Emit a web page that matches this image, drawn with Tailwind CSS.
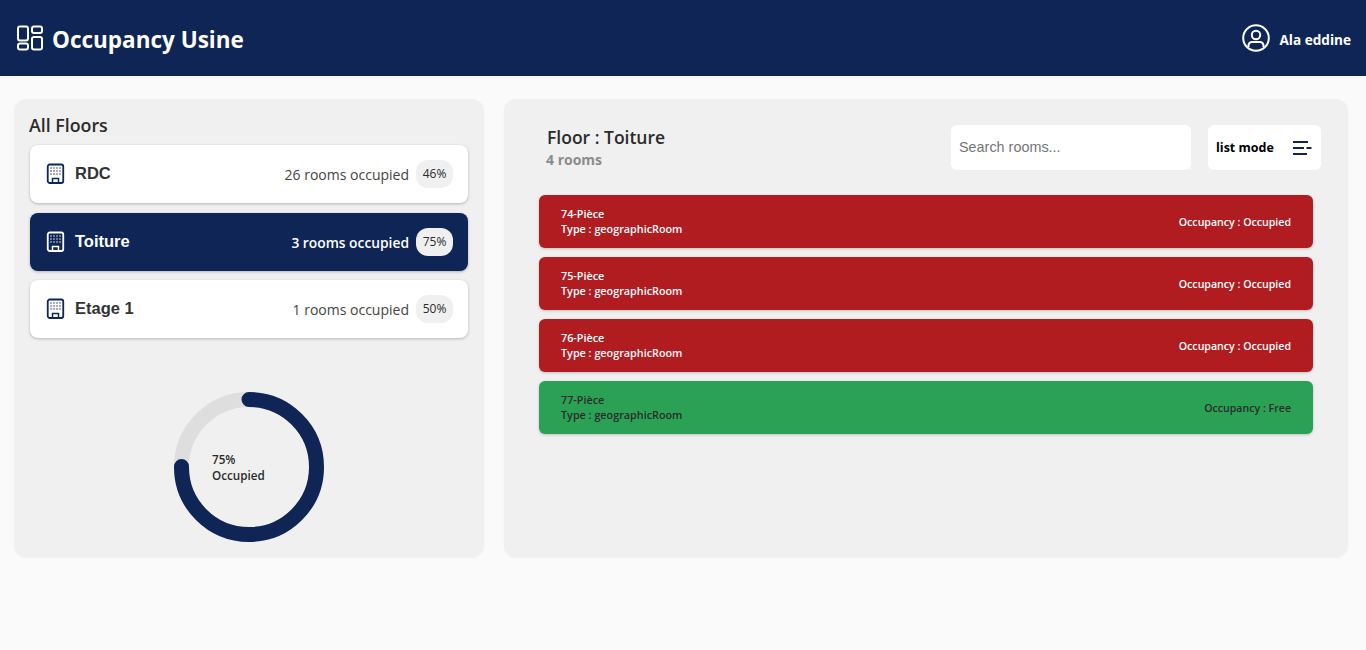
<!DOCTYPE html>
<html lang="en">
<head>
    <meta charset="UTF-8">
    <title>Occupancy Usine</title>
    <script src="https://cdn.jsdelivr.net/npm/@tailwindcss/browser@4"></script>
</head>
<body class="bg-[#fafafa] text-[#2b2b2b] font-['Open_Sans',sans-serif] h-[650px] overflow-hidden">

    <!-- Header -->
    <header class="h-[76px] bg-[#0e2555] flex items-center justify-between pl-[17px] pr-[15px] text-white">
        <div class="flex items-center gap-[9px]">
            <svg class="w-[26px] h-[26px]" viewBox="0 0 26 26" fill="none" stroke="white" stroke-width="2">
                <rect x="1" y="1.5" width="10" height="14" rx="2"/>
                <rect x="15" y="1.5" width="10" height="6.5" rx="2"/>
                <rect x="1" y="18.5" width="10" height="6" rx="2"/>
                <rect x="15" y="12" width="10" height="12.5" rx="2"/>
            </svg>
            <h1 class="text-[22.5px] font-bold leading-none pt-[4px]">Occupancy Usine</h1>
        </div>
        <div class="flex items-center gap-[9px]">
            <svg class="w-[28px] h-[28px]" viewBox="0 0 28 28" fill="none" stroke="white" stroke-width="2">
                <circle cx="14" cy="14" r="12.8"/>
                <circle cx="14" cy="11" r="4.2"/>
                <path d="M6.5 23 V21.5 a3.5 3.5 0 0 1 3.5 -3.5 h8 a3.5 3.5 0 0 1 3.5 3.5 V23"/>
            </svg>
            <span class="text-[13.6px] font-bold pt-[4px]">Ala eddine</span>
        </div>
    </header>

    <main class="flex gap-5 pl-[14px] pr-[18px] pt-[23px]">
        <!-- Floors -->
        <section class="w-[470px] h-[458px] bg-[#f0f0f0] rounded-xl shadow-[0_1px_2px_rgba(0,0,0,0.04)] px-4 pt-[15px]">
            <h2 class="text-[17.8px] font-semibold leading-[22px] mb-[9px] -ml-[1px]">All Floors</h2>
            <div class="flex flex-col gap-[9px]">
                <div class="h-[58px] mb-[1px] bg-white rounded-lg shadow-[0_1px_3px_rgba(0,0,0,0.25)] flex items-center justify-between px-[15px]">
                    <div class="flex items-center gap-[10px]">
                        <svg class="w-5 h-[22px] text-[#0e2555]" viewBox="0 0 20 22" fill="none" stroke="currentColor"><rect x="2.75" y="1.5" width="15.5" height="18.5" rx="2" stroke-width="1.8"/><path d="M5.5 5h1M8.5 5h1M11.5 5h1M14.5 5h1M5.5 8h1M8.5 8h1M11.5 8h1M14.5 8h1M5.5 11h1M8.5 11h1M11.5 11h1M14.5 11h1" stroke-width="1.5"/><path d="M7.5 20v-4.5h6V20" stroke-width="1.5"/></svg>
                        <span class="font-['Liberation_Sans',sans-serif] text-[16.5px] font-bold text-[#333] pb-[2px]">RDC</span>
                    </div>
                    <div class="flex items-center gap-[7px]">
                        <span class="text-[14px] font-medium text-[#444]">26 rooms occupied</span>
                        <span class="w-[37px] h-7 rounded-[12px] bg-[#f0f0f0] flex items-center justify-center text-[12px] font-medium">46%</span>
                    </div>
                </div>
                <div class="h-[58px] bg-[#0e2555] rounded-lg shadow-[0_1px_3px_rgba(0,0,0,0.25)] flex items-center justify-between px-[15px] text-white">
                    <div class="flex items-center gap-[10px]">
                        <svg class="w-5 h-[22px]" viewBox="0 0 20 22" fill="none" stroke="currentColor"><rect x="2.75" y="1.5" width="15.5" height="18.5" rx="2" stroke-width="1.8"/><path d="M5.5 5h1M8.5 5h1M11.5 5h1M14.5 5h1M5.5 8h1M8.5 8h1M11.5 8h1M14.5 8h1M5.5 11h1M8.5 11h1M11.5 11h1M14.5 11h1" stroke-width="1.5"/><path d="M7.5 20v-4.5h6V20" stroke-width="1.5"/></svg>
                        <span class="font-['Liberation_Sans',sans-serif] text-[16.5px] font-bold pb-[2px]">Toiture</span>
                    </div>
                    <div class="flex items-center gap-[7px]">
                        <span class="text-[13.8px] font-semibold pt-[2px]">3 rooms occupied</span>
                        <span class="w-[37px] h-7 rounded-[12px] bg-[#f0f0f0] text-[#2b2b2b] flex items-center justify-center text-[12px] font-medium">75%</span>
                    </div>
                </div>
                <div class="h-[58px] bg-white rounded-lg shadow-[0_1px_3px_rgba(0,0,0,0.25)] flex items-center justify-between px-[15px]">
                    <div class="flex items-center gap-[10px]">
                        <svg class="w-5 h-[22px] text-[#0e2555]" viewBox="0 0 20 22" fill="none" stroke="currentColor"><rect x="2.75" y="1.5" width="15.5" height="18.5" rx="2" stroke-width="1.8"/><path d="M5.5 5h1M8.5 5h1M11.5 5h1M14.5 5h1M5.5 8h1M8.5 8h1M11.5 8h1M14.5 8h1M5.5 11h1M8.5 11h1M11.5 11h1M14.5 11h1" stroke-width="1.5"/><path d="M7.5 20v-4.5h6V20" stroke-width="1.5"/></svg>
                        <span class="font-['Liberation_Sans',sans-serif] text-[16.5px] font-bold text-[#333] pb-[2px]">Etage 1</span>
                    </div>
                    <div class="flex items-center gap-[7px]">
                        <span class="text-[14px] font-medium text-[#444]">1 rooms occupied</span>
                        <span class="w-[37px] h-7 rounded-[12px] bg-[#f0f0f0] flex items-center justify-center text-[12px] font-medium">50%</span>
                    </div>
                </div>
            </div>

            <!-- Donut -->
            <div class="relative w-[150px] h-[150px] mx-auto mt-[53.5px]">
                <svg class="w-[150px] h-[150px] -rotate-90" viewBox="0 0 150 150" fill="none" stroke-width="15">
                    <circle cx="75" cy="75" r="67.5" stroke="#dedede"/>
                    <circle cx="75" cy="75" r="67.5" stroke="#0e2555" stroke-linecap="round" stroke-dasharray="318 424.1"/>
                </svg>
                <div class="absolute left-[38px] top-[59px] text-[11.7px] leading-[16px] font-semibold text-[#2b2b2b]">75%<br>Occupied</div>
            </div>
        </section>

        <!-- Rooms -->
        <section class="flex-1 h-[458px] bg-[#f0f0f0] rounded-xl shadow-[0_1px_2px_rgba(0,0,0,0.04)] pl-[35px] pr-[35px] pt-[26px]">
            <div class="flex items-start justify-between h-[70px]">
                <div class="pl-2">
                    <h2 class="text-[17.5px] font-semibold leading-[24px]">Floor : Toiture</h2>
                    <p class="text-[14px] font-bold text-[#8c8c8c] leading-[21px] -ml-[1px]">4 rooms</p>
                </div>
                <div class="flex gap-[17px] -mr-2">
                    <input class="w-[240px] h-[45px] bg-white rounded-md px-2 pb-[2px] text-[14.4px] font-['Liberation_Sans',sans-serif] placeholder:text-[#757575] outline-none" placeholder="Search rooms...">
                    <div class="w-[113px] h-[45px] bg-white rounded-md flex items-center justify-between pl-2 pr-[9px]">
                        <span class="text-[12.5px] font-bold text-black pt-[1px]">list mode</span>
                        <svg class="w-5 h-4" viewBox="0 0 20 16" fill="none" stroke="#0e2555" stroke-width="2"><path d="M1 2h15M1 8h11M14.5 8h5M1 14h14"/></svg>
                    </div>
                </div>
            </div>
            <div class="flex flex-col gap-[9px]">
                <div class="h-[53px] bg-[#b01c1f] rounded-md shadow-[0_1px_3px_rgba(0,0,0,0.2)] flex items-center justify-between px-[22px] text-white text-[10.8px] font-semibold leading-[15px]">
                    <div class="pb-[2px]">74-Pièce<br>Type : geographicRoom</div>
                    <div class="pt-[2px] text-[10.6px]">Occupancy : Occupied</div>
                </div>
                <div class="h-[53px] bg-[#b01c1f] rounded-md shadow-[0_1px_3px_rgba(0,0,0,0.2)] flex items-center justify-between px-[22px] text-white text-[10.8px] font-semibold leading-[15px]">
                    <div class="pb-[2px]">75-Pièce<br>Type : geographicRoom</div>
                    <div class="pt-[2px] text-[10.6px]">Occupancy : Occupied</div>
                </div>
                <div class="h-[53px] bg-[#b01c1f] rounded-md shadow-[0_1px_3px_rgba(0,0,0,0.2)] flex items-center justify-between px-[22px] text-white text-[10.8px] font-semibold leading-[15px]">
                    <div class="pb-[2px]">76-Pièce<br>Type : geographicRoom</div>
                    <div class="pt-[2px] text-[10.6px]">Occupancy : Occupied</div>
                </div>
                <div class="h-[53px] bg-[#2ba155] rounded-md shadow-[0_1px_3px_rgba(0,0,0,0.2)] flex items-center justify-between px-[22px] text-[#2b2b2b] text-[10.8px] font-semibold leading-[15px]">
                    <div class="pb-[2px]">77-Pièce<br>Type : geographicRoom</div>
                    <div class="pt-[2px] text-[10.6px]">Occupancy : Free</div>
                </div>
            </div>
        </section>
    </main>

</body>
</html>
